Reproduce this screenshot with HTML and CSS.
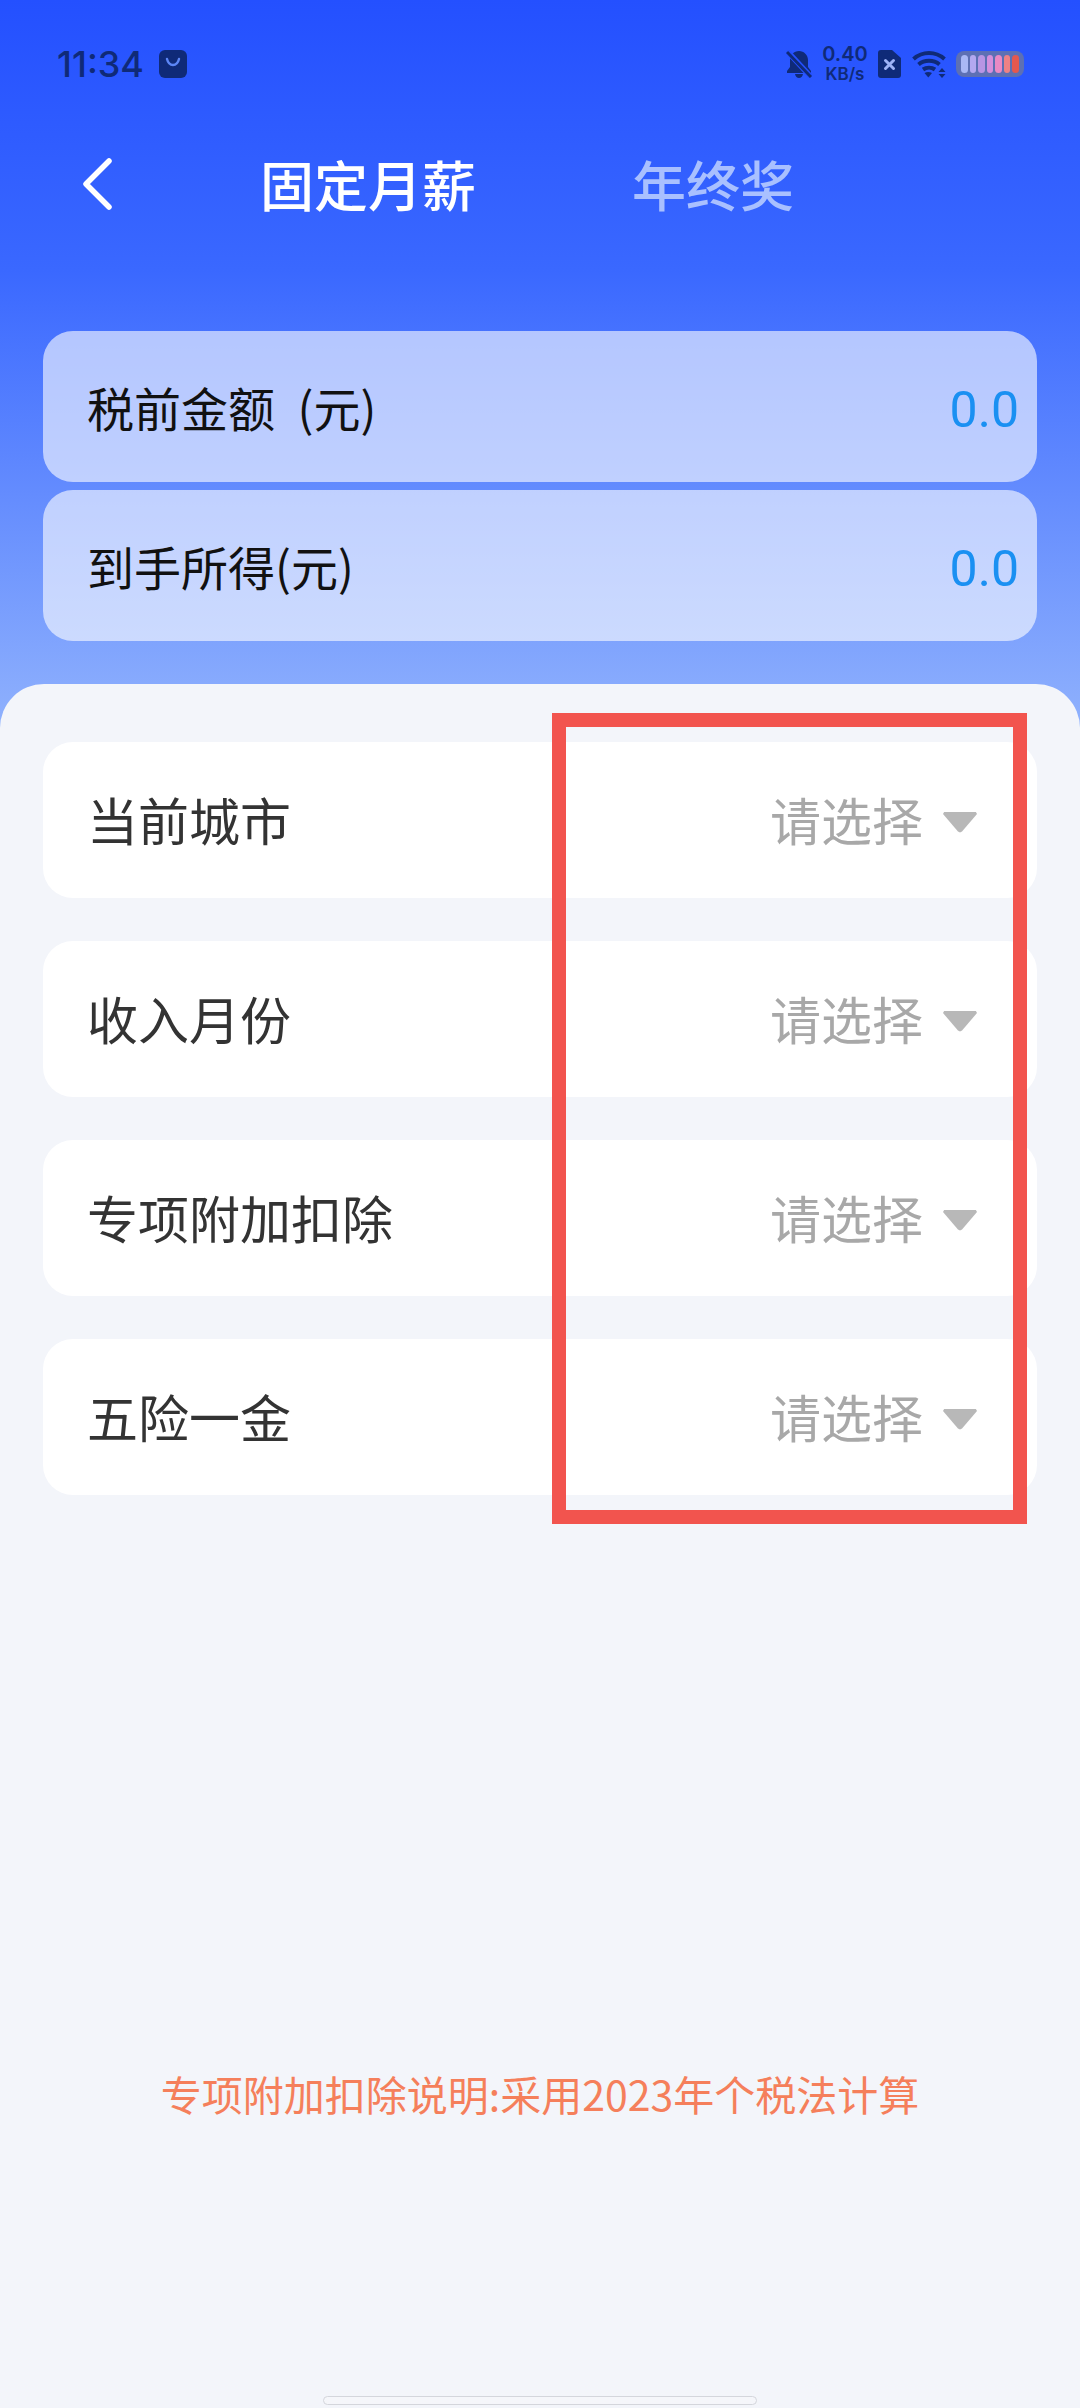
FILE: index.html
```html
<!DOCTYPE html>
<html lang="zh-CN">
<head>
  <meta charset="UTF-8">
  <meta name="viewport" content="width=device-width, initial-scale=1.0">
  <title>固定月薪</title>
  <link rel="stylesheet" href="styles.css">
</head>
<body>
  <div class="app">
    <div class="status">
      <div class="status-left">
        <span class="time">11:34</span>
        <svg class="bag" viewBox="0 0 28 28"><rect width="28" height="28" rx="6" fill="#0f2a78"/><path d="M8 9c1 4 3 6 6 6s5-2 6-6" fill="none" stroke="#5c86f5" stroke-width="2.4" stroke-linecap="round"/></svg>
      </div>
      <div class="status-right">
        <svg class="bell" viewBox="0 0 26 28"><path d="M13 1c-5 0-9 4-9 9v7l-3 4v2h24v-2l-3-4v-7c0-5-4-9-9-9zM9 24c.5 2.500 2 4 4 4s3.500-1.500 4-4z" fill="#0f2a78"/><path d="M1 1l24 26" stroke="#2450ff" stroke-width="5.500"/><path d="M1 2l24 25" stroke="#0f2a78" stroke-width="3"/></svg>
        <div class="speed">
          <span class="speed-num">0.40</span>
          <span class="speed-unit">KB/s</span>
        </div>
        <svg class="sim" viewBox="0 0 23 28"><path d="M3 0h11l9 8v17a3 3 0 0 1-3 3H3a3 3 0 0 1-3-3V3a3 3 0 0 1 3-3z" fill="#0f2a78"/><path d="M7.500 10.500l8 8M15.500 10.500l-8 8" stroke="#9db2f7" stroke-width="3" stroke-linecap="round"/></svg>
        <svg class="wifi" viewBox="0 0 34 28"><path d="M1.500 9c9-8 22-8 31 0M6.500 14.500c6-5 15-5 21 0M11 19.500c3.500-2.500 8.500-2.500 12 0" fill="none" stroke="#0f2a78" stroke-width="4"/><path d="M12.500 23c2.500-1.500 5-1.500 7.500 0l-3.700 4.500z" fill="#0f2a78"/><path d="M30 18l3.500 4h-7zM30 28l3.500-4h-7z" fill="#0f2a78"/></svg>
        <div class="battery">
          <i class="c1"></i><i class="c2"></i><i class="c3"></i><i class="c4"></i><i class="c5"></i><i class="c6"></i><i class="c7"></i>
        </div>
      </div>
    </div>

    <div class="nav">
      <svg class="back" viewBox="0 0 29 52"><path d="M26 3L3 26l23 23" fill="none" stroke="#fff" stroke-width="5.500" stroke-linecap="round" stroke-linejoin="round"/></svg>
      <span class="tab active">固定月薪</span>
      <span class="tab">年终奖</span>
    </div>

    <div class="summary">
      <div class="sum-card">
        <span class="sum-label">税前金额 (元)</span>
        <span class="amount">0.0</span>
      </div>
      <div class="sum-card">
        <span class="sum-label">到手所得(元)</span>
        <span class="amount">0.0</span>
      </div>
    </div>

    <div class="sheet">
      <div class="rows">
        <div class="row">
          <span>当前城市</span>
          <div class="pick"><span>请选择</span><b class="caret"></b></div>
        </div>
        <div class="row">
          <span>收入月份</span>
          <div class="pick"><span>请选择</span><b class="caret"></b></div>
        </div>
        <div class="row">
          <span>专项附加扣除</span>
          <div class="pick"><span>请选择</span><b class="caret"></b></div>
        </div>
        <div class="row">
          <span>五险一金</span>
          <div class="pick"><span>请选择</span><b class="caret"></b></div>
        </div>
      </div>
      <div class="note">专项附加扣除说明:采用2023年个税法计算</div>
      <div class="home-bar"></div>
      <div class="mark"></div>
    </div>
  </div>
</body>
</html>
```
FILE: styles.css
```css
* {
  box-sizing: border-box;
}
html, body {
  margin: 0;
  height: 100%;
}
body {
  font-family: "Noto Sans CJK SC", "Noto Sans", sans-serif;
  background-color: #f3f5fa;
}
.app {
  height: 2408px;
  display: flex;
  flex-direction: column;
  overflow: hidden;
  background: linear-gradient(180deg, #2450ff 0, #3a68ff 270px, #8eb0fd 720px);
}

/* status bar */
.status {
  height: 100px;
  padding: 28px 56px 0 57px;
  display: flex;
  justify-content: space-between;
  align-items: center;
  color: #0f2a78;
}
.status-left {
  display: flex;
  align-items: center;
  gap: 15px;
}
.time {
  font-family: Inter, sans-serif;
  font-size: 36px;
  font-weight: 500;
  line-height: 40px;
}
.bag {
  width: 28px;
  height: 28px;
}
.status-right {
  display: flex;
  align-items: center;
}
.bell {
  width: 26px;
  height: 28px;
}
.speed {
  width: 46px;
  margin-left: 10px;
  display: flex;
  flex-direction: column;
  align-items: center;
  font-family: Inter, sans-serif;
  font-weight: 600;
}
.speed-num {
  font-size: 20px;
  line-height: 21px;
}
.speed-unit {
  font-size: 17px;
  line-height: 19px;
}
.sim {
  width: 23px;
  height: 28px;
  margin-left: 10px;
}
.wifi {
  width: 34px;
  height: 28px;
  margin-left: 11px;
}
.battery {
  width: 68px;
  height: 26px;
  margin-left: 10px;
  padding: 4px 5px;
  display: flex;
  gap: 2px;
  background-color: #5d70b4;
  border-radius: 8px;
}
.battery i {
  flex: 1;
  border-radius: 4px;
}
.c1 { background-color: #a9b8f5; }
.c2 { background-color: #b3a8f0; }
.c3 { background-color: #b795e4; }
.c4 { background-color: #d48fdc; }
.c5 { background-color: #ea89c4; }
.c6 { background-color: #ee8184; }
.c7 { background-color: #e4584f; }

/* top tabs */
.nav {
  height: 170px;
  padding: 0 0 3px 83px;
  display: flex;
  align-items: center;
  flex-shrink: 0;
}
.back {
  width: 29px;
  height: 52px;
}
.tab {
  font-size: 54px;
  font-weight: 500;
  line-height: 70px;
  color: #a9c0ff;
  margin-left: 156px;
}
.tab.active {
  color: #fff;
  margin-left: 148px;
}

/* summary cards */
.summary {
  margin: 61px 43px 0;
  display: flex;
  flex-direction: column;
  gap: 8px;
}
.sum-card {
  height: 151px;
  padding: 0 18px 0 44px;
  display: flex;
  justify-content: space-between;
  align-items: center;
  font-size: 47px;
  color: #111;
  background-color: rgba(255, 255, 255, 0.6);
  border-radius: 30px;
}
.sum-label {
  word-spacing: 12px;
}
.amount {
  padding-top: 6px;
  font-family: Roboto, sans-serif;
  font-size: 50px;
  color: #1a90f2;
}

/* white part */
.sheet {
  position: relative;
  flex: 1;
  margin-top: 43px;
  padding: 58px 43px 0;
  display: flex;
  flex-direction: column;
  background-color: #f3f5fa;
  border-radius: 44px 44px 0 0;
}
.rows {
  display: flex;
  flex-direction: column;
  gap: 43px;
}
.row {
  height: 156px;
  padding: 0 60px 2px 44px;
  display: flex;
  justify-content: space-between;
  align-items: center;
  font-size: 51px;
  color: #333;
  background-color: #fff;
  border-radius: 30px;
}
.pick {
  display: flex;
  align-items: center;
  gap: 20px;
  color: #a8a8a8;
}
.caret {
  width: 34px;
  height: 21px;
  margin-top: 6px;
  background-color: #b8b8b8;
  clip-path: polygon(4% 0, 96% 0, 100% 12%, 56% 95%, 50% 100%, 44% 95%, 0 12%);
}
.note {
  margin-top: 570px;
  text-align: center;
  font-size: 41px;
  line-height: 56px;
  color: #f57f5b;
}
.home-bar {
  width: 434px;
  height: 9px;
  margin: auto auto 3px;
  background-color: #f5f6fa;
  border: 1px solid #d4d6dc;
  border-radius: 5px;
}

/* red annotation box over the rows */
.mark {
  position: absolute;
  left: 552px;
  top: 29px;
  width: 475px;
  height: 811px;
  border: 14px solid #f2544e;
}
```
